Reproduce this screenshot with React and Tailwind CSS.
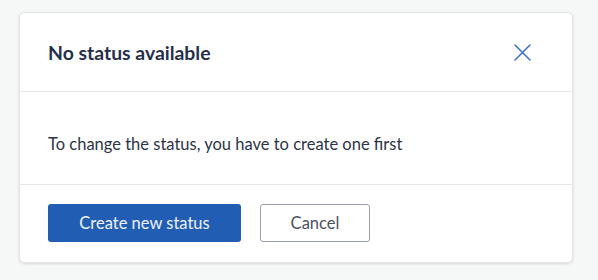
export default function App() {
    return (
        <div className="min-h-screen bg-[#f6f7f7] pt-[12px] pl-[19px]" style={{ fontFamily: 'Lato, "Liberation Sans", sans-serif' }}>
            <div className="w-[554px] bg-white rounded-[5px] border border-[#e3e4e6] shadow-[0_1px_3px_rgba(0,0,0,0.12)]">

                {/* Header */}
                <div className="h-[79px] flex items-center justify-between pl-[28px] pr-[41px] pt-[1px] border-b border-[#e4e5e7]">
                    <h2 className="text-[19.4px] font-bold text-[#26304a]">No status available</h2>
                    <button className="text-[#3a6fd0]">
                        <svg width="17" height="17" viewBox="0 0 17 17" fill="none" stroke="currentColor" strokeWidth="1.5" strokeLinecap="round">
                            <path d="M1 1L16 16M16 1L1 16" />
                        </svg>
                    </button>
                </div>

                {/* Body */}
                <div className="h-[93px] flex items-center pl-[28px] pt-[12px] border-b border-[#e4e5e7]">
                    <p className="text-[16.5px] text-[#2c3547]">To change the status, you have to create one first</p>
                </div>

                {/* Footer */}
                <div className="h-[77px] flex items-start gap-[19px] pl-[28px] pt-[19px]">
                    <button className="w-[193px] h-[38px] rounded-[3px] bg-[#225db4] text-[#eef2fa] text-[16.5px]">
                        Create new status
                    </button>
                    <button className="w-[110px] h-[38px] rounded-[3px] border border-[#9aa0a8] bg-white text-[#4a5260] text-[16.5px]">
                        Cancel
                    </button>
                </div>

            </div>
        </div>
    );
}
